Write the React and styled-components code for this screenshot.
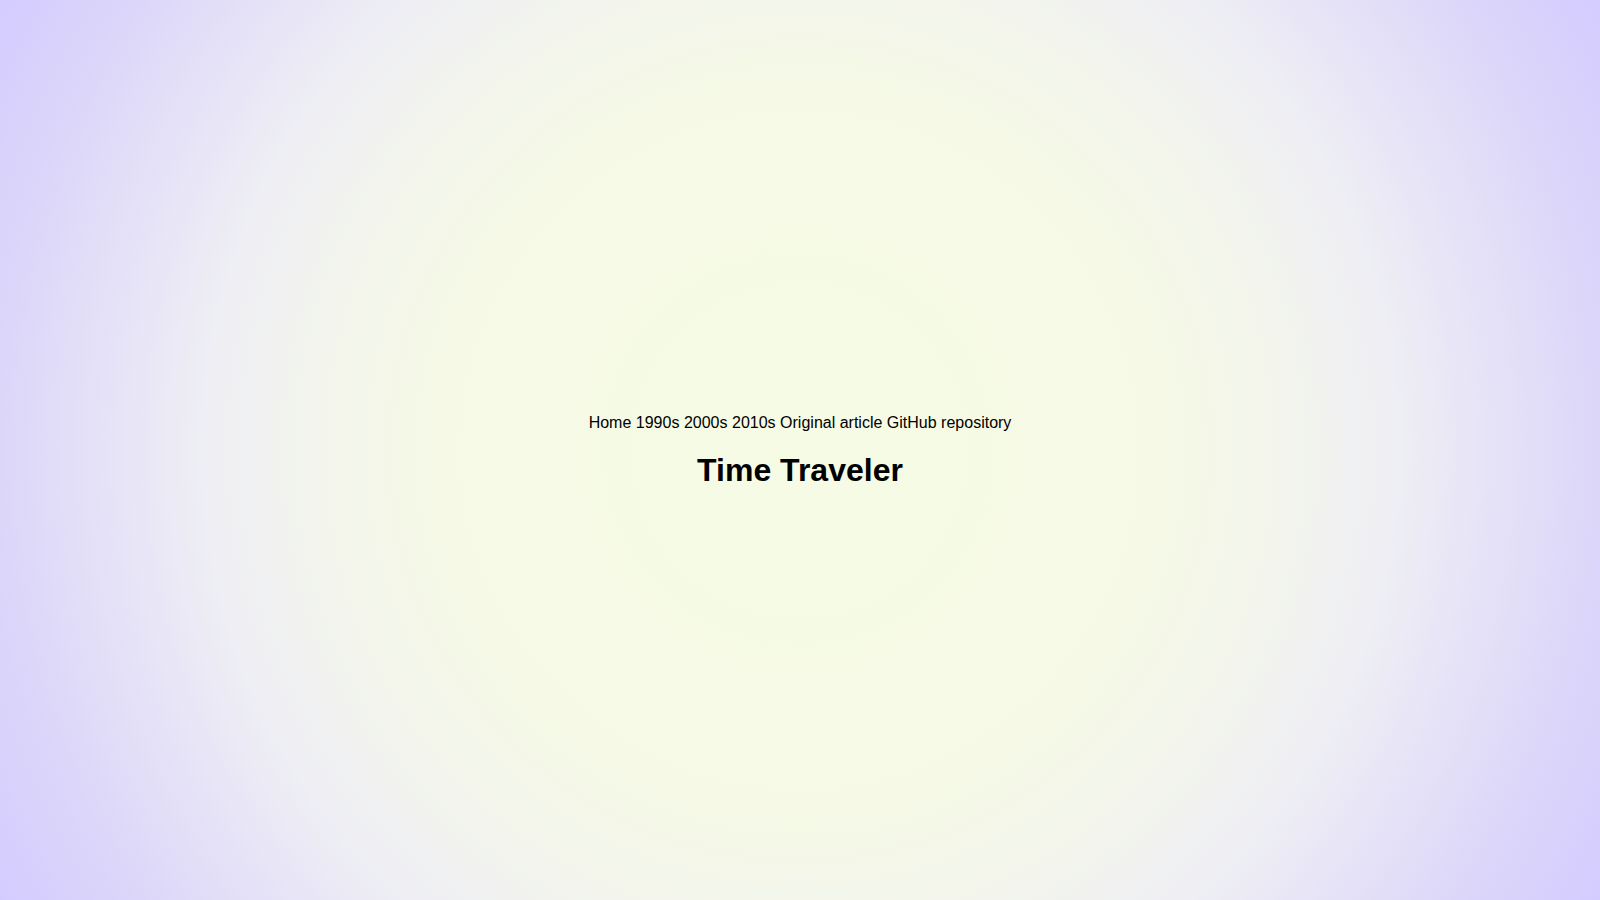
import React from 'react';
import styled, { createGlobalStyle } from 'styled-components';

const GlobalStyle = createGlobalStyle`
  html, body {
    margin: 0;
    padding: 0;
  }
  body {
    font-family: "Liberation Sans", Arial, Helvetica, sans-serif;
    color: #000;
  }
`;

const Page = styled.main`
  box-sizing: border-box;
  min-height: 100vh;
  padding-top: 2px;
  display: flex;
  flex-direction: column;
  align-items: center;
  justify-content: center;
  background: radial-gradient(
    circle at center,
    #f6fbe4 0%,
    #f5f9e6 40%,
    #f3f5ec 52%,
    #eeeef4 65%,
    #e6e3f7 75%,
    #dcd6f9 87%,
    #d4ccff 100%
  );
`;

const Nav = styled.nav`
  display: flex;
  gap: 4.5px;
  font-size: 16px;
  line-height: 20px;
`;

const NavLink = styled.a`
  color: #000;
  text-decoration: none;
`;

const Title = styled.h1`
  margin: 18px 0 0;
  font-size: 32px;
  line-height: 38px;
  font-weight: 700;
`;

const links = ['Home', '1990s', '2000s', '2010s', 'Original article', 'GitHub repository'];

const App = () => {
  return (
    <>
      <GlobalStyle />
      <Page>
        <Nav>
          {links.map(label => (
            <NavLink key={label} href="#">{label}</NavLink>
          ))}
        </Nav>
        <Title>Time Traveler</Title>
      </Page>
    </>
  );
};

export default App;
